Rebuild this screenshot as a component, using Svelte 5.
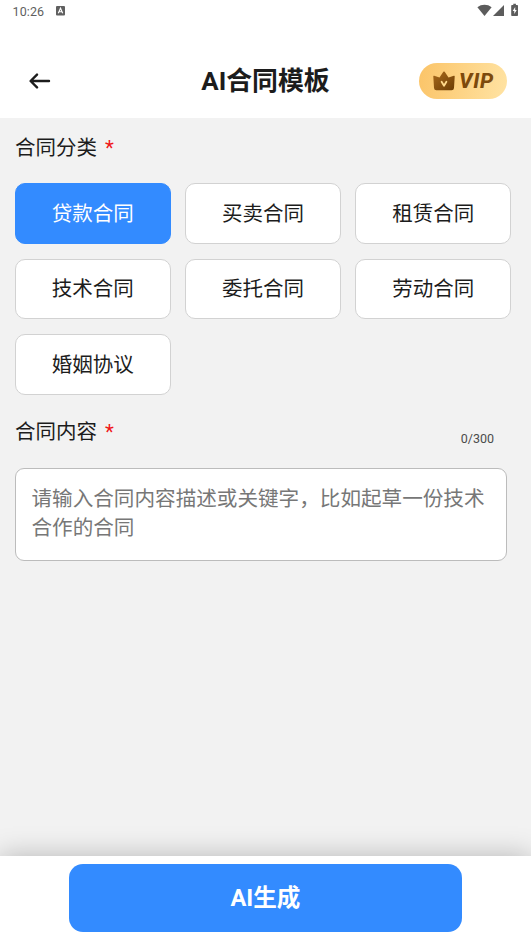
<script>
  const maxLength = 300;
  const categories = [
    '贷款合同',
    '买卖合同',
    '租赁合同',
    '技术合同',
    '委托合同',
    '劳动合同',
    '婚姻协议'
  ];

  let selected = $state('贷款合同');
  let content = $state('');
</script>

<div class="page">
  <div class="status-bar">
    <span class="time">10:26</span>
    <svg class="app-badge" width="9" height="10" viewBox="0 0 9 10">
      <rect width="9" height="9.6" rx="1" fill="#606060" />
      <path d="M2.3 7.3 4.5 2.2 6.7 7.3M3.1 5.7h2.8" fill="none" stroke="#fff" stroke-width="1.1" />
    </svg>
    <svg class="system-icons" width="42" height="14" viewBox="0 0 42 14">
      <path d="M.4 4.2C4.4.9 10.6.9 14.6 4.2L7.5 13Z" fill="#5c5c5c" />
      <path d="M16 13 27 2v11Z" fill="#5c5c5c" />
      <path d="M35 2h1.3V.8h2.6V2h1.3q.8 0 .8.8v9.4q0 .8-.8.8H35q-.8 0-.8-.8V2.8Q34.2 2 35 2Z" fill="#5c5c5c" />
      <path d="M38.2 4 35.7 8h1.6v3l2.4-4h-1.5Z" fill="#fff" />
    </svg>
  </div>

  <header>
    <button class="back" aria-label="返回">
      <svg width="22" height="16" viewBox="0 0 22 16">
        <path d="M8 1.6 1.6 8 8 14.4M2 8h18" />
      </svg>
    </button>
    <h1>AI合同模板</h1>
    <button class="vip">
      <svg width="22" height="20" viewBox="0 0 22 20">
        <defs>
          <linearGradient id="crown" x1="0" y1="0" x2="1" y2="1">
            <stop offset="0" stop-color="#a9691b" />
            <stop offset="1" stop-color="#6c3d05" />
          </linearGradient>
        </defs>
        <path d="M.3 5.4Q.2 4.4 1.2 4.8L6.5 6.6 10.3.8Q11 .1 11.7.8L15.5 6.6 20.8 4.8Q21.800 4.400 21.700 5.400L21 17Q20.800 19.200 18.600 19.200H3.400Q1.200 19.200 1 17Z" fill="url(#crown)" />
        <path d="M8.6 10.8 11 14.8 13.4 10.8" fill="none" stroke="#ffd98c" stroke-width="1.8" stroke-linecap="round" stroke-linejoin="round" />
      </svg>
      <span>VIP</span>
    </button>
  </header>

  <main>
    <h2>合同分类 <span class="required">*</span></h2>
    <div class="categories">
      {#each categories as category}
        <button
          class="category"
          class:active={selected === category}
          onclick={() => (selected = category)}
        >
          {category}
        </button>
      {/each}
    </div>

    <div class="content-header">
      <h2>合同内容 <span class="required">*</span></h2>
      <span class="counter">{content.length}/{maxLength}</span>
    </div>
    <textarea
      bind:value={content}
      maxlength={maxLength}
      placeholder="请输入合同内容描述或关键字，比如起草一份技术合作的合同"
    ></textarea>
  </main>

  <footer>
    <button class="generate">AI生成</button>
  </footer>
</div>

<style>
  :global(body) {
    margin: 0;
  }

  .page {
    display: flex;
    flex-direction: column;
    height: 100vh;
    overflow: hidden;
    background: #f2f2f2;
    color: #1c1c1c;
    font-family: Roboto, 'Noto Sans CJK SC', sans-serif;
  }

  button {
    margin: 0;
    padding: 0;
    border: none;
    font-family: inherit;
    color: inherit;
    cursor: pointer;
  }

  .status-bar {
    display: flex;
    align-items: center;
    box-sizing: border-box;
    height: 22px;
    padding: 0 12px 0 12.5px;
    background: #fff;
  }

  .time {
    font-size: 12.5px;
    letter-spacing: 0.1px;
    color: #5f5f5f;
  }

  .app-badge {
    margin-left: 12px;
  }

  .system-icons {
    margin-left: auto;
    margin-bottom: 3px;
  }

  header {
    display: grid;
    grid-template-columns: 1fr auto 1fr;
    align-items: center;
    box-sizing: border-box;
    height: 96px;
    padding: 19px 24px 0;
    background: #fff;
  }

  .back {
    justify-self: start;
    display: flex;
    margin: 3px 0 0 5px;
    background: none;
  }

  .back path {
    fill: none;
    stroke: #1c1c1c;
    stroke-width: 2.4;
    stroke-linecap: round;
    stroke-linejoin: round;
  }

  h1 {
    margin: 2px 0 0;
    font-size: 25.9px;
    font-weight: 700;
    line-height: 38px;
  }

  .vip {
    justify-self: end;
    display: flex;
    align-items: center;
    gap: 4px;
    box-sizing: border-box;
    width: 88px;
    height: 36px;
    margin-top: 3px;
    padding-left: 14px;
    border-radius: 18px;
    background: linear-gradient(100deg, #fbc468, #ffe3a3);
  }

  .vip span {
    font-size: 21px;
    font-weight: 800;
    font-style: italic;
    letter-spacing: 0.8px;
    color: #7d4a0c;
  }

  main {
    flex: 1;
    padding: 15px 20px 0 15px;
  }

  h2 {
    margin: 0;
    font-size: 20.5px;
    font-weight: 400;
    line-height: 30px;
  }

  .required {
    margin-left: 3px;
    color: #f01818;
  }

  .categories {
    display: grid;
    grid-template-columns: repeat(3, 1fr);
    gap: 15px 14.5px;
    margin-top: 20px;
  }

  .category {
    box-sizing: border-box;
    height: 60.5px;
    padding-bottom: 3px;
    border: 1px solid #d2d2d2;
    border-radius: 10px;
    background: #fff;
    font-size: 20.5px;
  }

  .category.active {
    border-color: #338bff;
    background: #338bff;
    color: #fff;
  }

  .content-header {
    display: flex;
    justify-content: space-between;
    margin-top: 22px;
    padding-right: 17px;
  }

  .counter {
    margin-top: 14px;
    font-size: 12.5px;
    color: #4c4c4c;
  }

  textarea {
    display: block;
    box-sizing: border-box;
    width: 492px;
    height: 93px;
    margin-top: 21.5px;
    padding: 16px 6px 10px 15.5px;
    border: 1px solid #bcbcbc;
    border-radius: 9px;
    outline: none;
    resize: none;
    background: #fff;
    font-family: inherit;
    font-size: 20.6px;
    line-height: 29px;
  }

  textarea::placeholder {
    color: #777;
  }

  footer {
    display: flex;
    justify-content: center;
    box-sizing: border-box;
    height: 88px;
    padding-top: 8px;
    background: #fff;
    box-shadow: 0 0 26px rgba(0, 0, 0, 0.25);
  }

  .generate {
    width: 393px;
    height: 68px;
    padding-bottom: 4px;
    border-radius: 14px;
    background: #338bff;
    color: #fff;
    font-size: 23.6px;
    font-weight: 700;
  }
</style>
